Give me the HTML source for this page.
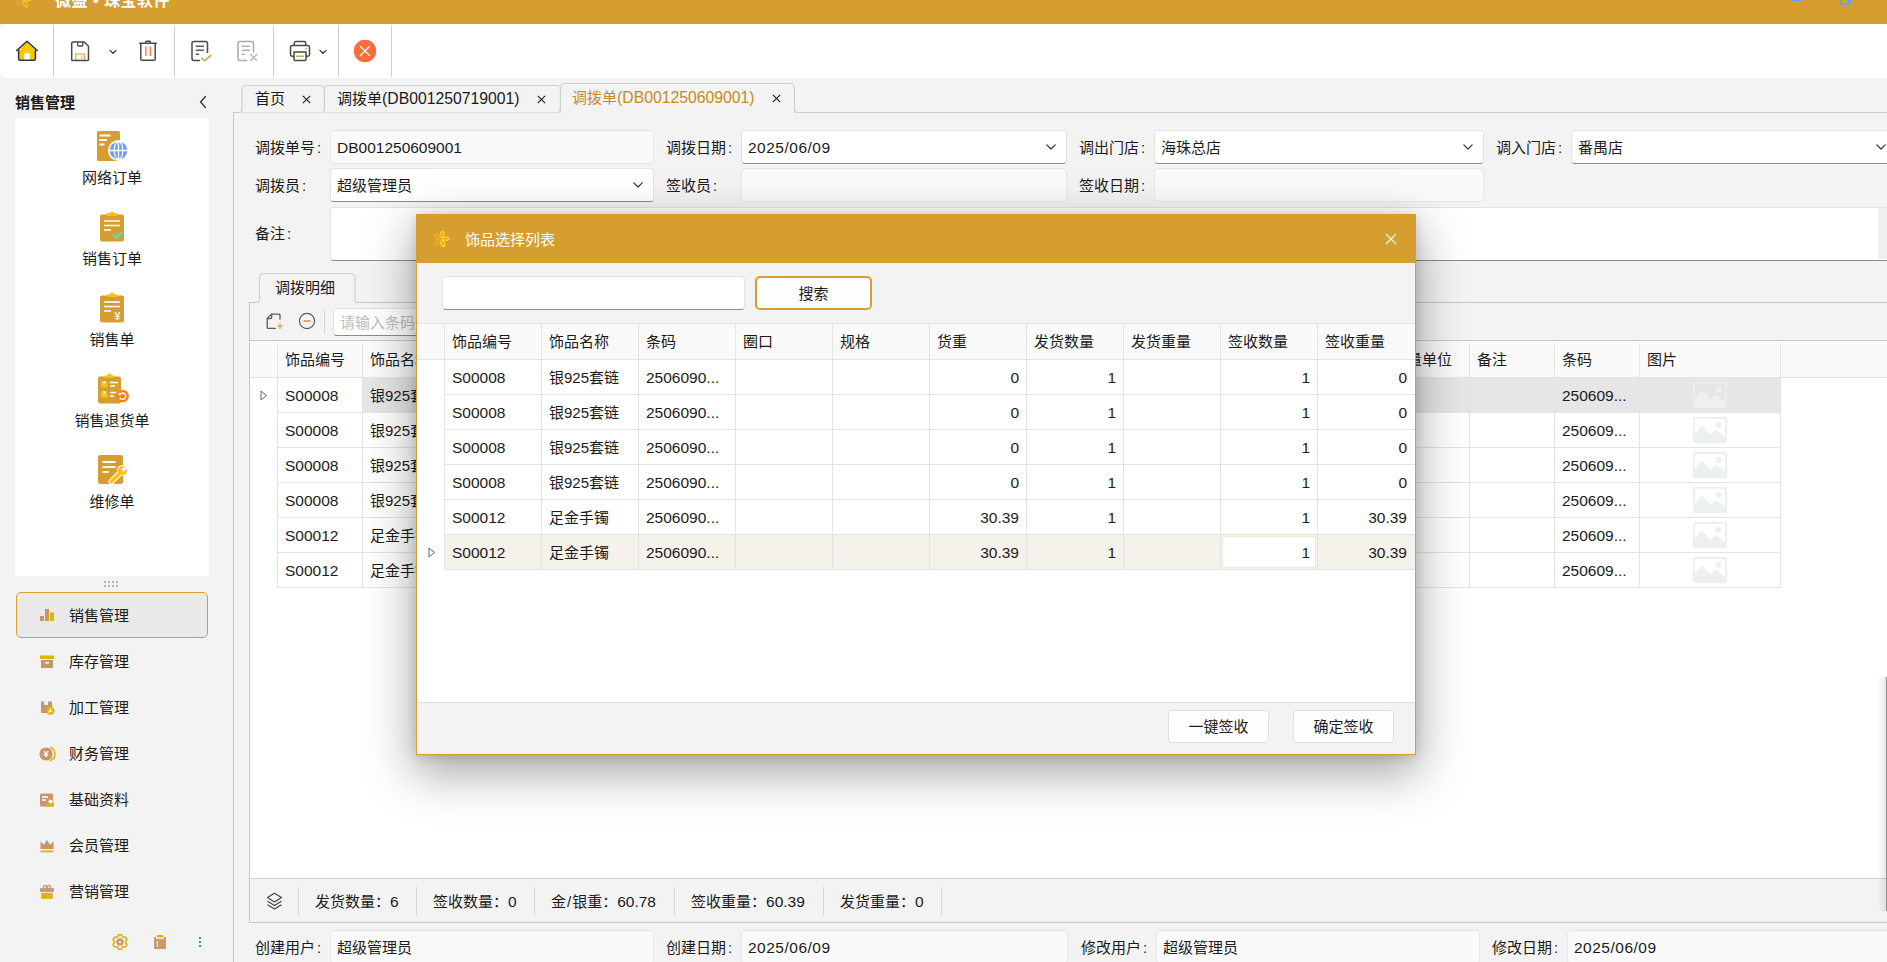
<!DOCTYPE html>
<html lang="zh-CN">
<head>
<meta charset="utf-8">
<title>微盛 • 珠宝软件</title>
<style>
*{box-sizing:border-box;margin:0;padding:0}
html,body{width:1887px;height:962px;overflow:hidden}
body{position:relative;background:#f3f3f3;font-family:"Liberation Sans","Noto Sans CJK SC",sans-serif;font-size:15px;color:#1b1b1b;line-height:20px}
.abs{position:absolute}
.l{font-size:15.5px}
.l2{font-size:15.5px;letter-spacing:.5px}
/* title bar */
#titlebar{position:absolute;left:0;top:0;width:1887px;height:24px;background:#d59e2e}
#titlebar .ttl{position:absolute;left:55px;top:-9px;letter-spacing:.5px;font-size:16px;font-weight:bold;color:#fff;line-height:20px;white-space:nowrap}
/* toolbar */
#toolbar{position:absolute;left:0;top:24px;width:1887px;height:54px;background:#fff;border-radius:7px 0 0 7px}
.tsep{position:absolute;top:1px;width:1px;height:52px;background:#d0d0d0}
.ticon{position:absolute}
/* sidebar */
#sidebar{position:absolute;left:0;top:78px;width:233px;height:884px}
#sideborder{position:absolute;left:233px;top:112px;width:1px;height:850px;background:#c8c8c8}
#sidehead{position:absolute;left:15px;top:93px;font-weight:bold;font-size:15px;line-height:20px}
#sidepanel{position:absolute;left:15px;top:118px;width:194px;height:458px;background:#fff}
.sitem{position:absolute;left:0;width:194px;text-align:center;font-size:15px;line-height:20px;margin-top:1px}
.nav{position:absolute;left:16px;width:192px;height:46px;border-radius:5px;font-size:15px}
.nav.sel{background:#e9e9e9;border:1px solid #d59e2e}
.nav span{position:absolute;left:53px;top:14px;line-height:20px;white-space:nowrap}
.nav.sel span{left:52px;top:13px}
.nav svg{position:absolute;left:23px;top:16px}
.nav.sel svg{left:22px;top:15px}
/* tabs */
.tab{position:absolute;top:85px;height:28px;background:#f3f3f3;border:1px solid #d2d2d2;border-bottom:none;border-radius:6px 6px 0 0;font-size:15px;line-height:20px;white-space:nowrap}
.tab span{position:absolute;top:3px}
.tab.act{top:83px;height:30px;color:#c88a1c;z-index:2}
#mainline{position:absolute;left:233px;top:112px;width:1654px;height:1px;background:#c8c8c8}
/* form */
.lbl{position:absolute;font-size:15px;line-height:20px;white-space:nowrap}
.inp{position:absolute;height:34px;border:1px solid #e6e6e6;border-radius:4px;background:#fafafa;font-size:15px;line-height:20px;padding:7px 0 0 6px;white-space:nowrap}
.inp.w{background:#fff;border-color:#e2e2e2;border-bottom:1px solid #8c8c8c}
i{font-style:normal;margin-left:2px}
b{font-weight:normal;margin:0 1px}
.chev{position:absolute;width:10px;height:6px}
/* grid */
.g{position:absolute;font-size:15px;line-height:20px;white-space:nowrap}
.hl{position:absolute;height:1px;background:#e3e3e3}
.vl{position:absolute;width:1px;background:#e3e3e3}
.ph{position:absolute;width:34px;height:26px}
/* dialog */
#dlg{position:absolute;left:416px;top:214px;width:1000px;height:541px;background:#fff;border:1px solid #d59e2e;box-shadow:0 16px 44px 3px rgba(0,0,0,.34),0 2px 10px rgba(0,0,0,.14);z-index:10}
#dlgtitle{position:absolute;left:0;top:0;width:998px;height:48px;background:#d59e2e}
.btn{position:absolute;height:33px;background:#fefefe;border:1px solid #e0e0e0;border-radius:4px;text-align:center;font-size:15px;line-height:20px;padding-top:6px}
</style>
</head>
<body>
<div id="titlebar">
<svg class="abs" style="left:15px;top:-9px" width="17" height="17" viewBox="-8.5 -8.5 17 17" fill="none" stroke-width="1.3" stroke-linecap="round" opacity=".85">
<g stroke="#ffd42a"><ellipse cx="0" cy="-4.6" rx="1.6" ry="3.2" transform="rotate(15)"/><ellipse cx="0" cy="-4.6" rx="1.6" ry="3.2" transform="rotate(87)"/><ellipse cx="0" cy="-4.6" rx="1.6" ry="3.2" transform="rotate(159)"/></g>
<g stroke="#f7a823"><ellipse cx="0" cy="-4.6" rx="1.6" ry="3.2" transform="rotate(231)"/><ellipse cx="0" cy="-4.6" rx="1.6" ry="3.2" transform="rotate(303)"/></g>
</svg>
<div class="ttl">微盛 • 珠宝软件</div>
<svg class="abs" style="left:1791px;top:-1px" width="12" height="3" viewBox="0 0 12 3"><rect x="0" y="0" width="10" height="2" fill="#5ba3ee"/></svg>
<svg class="abs" style="left:1840px;top:-6px" width="12" height="12" viewBox="0 0 12 12" fill="none" stroke="#5ba3ee" stroke-width="1.2"><rect x="1" y="3" width="7.5" height="7.5" rx="1.2"/><path d="M4 1h6.500v7.800h-1.800"/></svg>
</div>
<div id="toolbar">
<div class="tsep" style="left:53px"></div><div class="tsep" style="left:174px"></div><div class="tsep" style="left:273px"></div><div class="tsep" style="left:338px"></div><div class="tsep" style="left:391px"></div>
<!-- home -->
<svg class="ticon" style="left:15px;top:15px" width="24" height="24" viewBox="0 0 24 24"><path d="M3.6 11.2V20c0 .7.5 1.2 1.2 1.200h14.400c.7 0 1.200-.5 1.200-1.200V11.200L12 2.600z" fill="#f5c800"/><path d="M9.200 21.200V15.200c0-.5.400-.9.900-.9h3.800c.5 0 .9.400.9.900v6z" fill="#fff"/><path d="M3.600 11.500V20c0 .7.500 1.200 1.200 1.200h14.400c.7 0 1.200-.5 1.200-1.200v-8.500M1.700 11.500 12 2.300l10.300 9.200" fill="none" stroke="#2f3540" stroke-width="1.500" stroke-linecap="round" stroke-linejoin="round"/></svg>
<!-- save -->
<svg class="ticon" style="left:69px;top:15px" width="22" height="24" viewBox="0 0 22 24" fill="none" stroke-linejoin="round"><path d="M6.800 15h8.600v6.200H6.800z" stroke="#d59e2e" stroke-width="1.100"/><path d="M12.700 17.200v2.300" stroke="#d59e2e" stroke-width="1.100"/><path d="M2.700 4.200c0-.7.500-1.200 1.200-1.200h11.300l4.300 4.300v13.100c0 .700-.5 1.200-1.200 1.200H3.900c-.7 0-1.200-.5-1.200-1.200z" stroke="#4a4a4a" stroke-width="1.500"/><path d="M8.600 3.200v2.900c0 .5.400.9.900.9h3.400c.5 0 .9-.4.900-.9V3.200" stroke="#4a4a4a" stroke-width="1.300"/></svg>
<svg class="ticon" style="left:108px;top:25px" width="10" height="6" viewBox="0 0 10 6" fill="none" stroke="#333" stroke-width="1.300" stroke-linecap="round" stroke-linejoin="round"><path d="M2 1.400 5 4.300 8 1.400"/></svg>
<!-- trash -->
<svg class="ticon" style="left:137px;top:15px" width="22" height="24" viewBox="0 0 22 24" fill="none"><path d="M8.900 7.500v9.500M13.300 7.500v9.500" stroke="#ff7043" stroke-width="1.300"/><path d="M2.200 4.300h17.600M8.700 4.100V3c0-.4.300-.7.700-.7h3.200c.4 0 .7.300.7.700v1.100M3.800 4.500v15.700c0 .6.400 1 1 1h12.400c.6 0 1-.4 1-1V4.500" stroke="#4a4a4a" stroke-width="1.500" stroke-linejoin="round"/></svg>
<!-- doc check -->
<svg class="ticon" style="left:189px;top:15px" width="24" height="24" viewBox="0 0 24 24" fill="none" stroke-linecap="round" stroke-linejoin="round"><path d="M18.500 13.500V4.400c0-1.100-.9-2-2-2H5c-1.100 0-2 .9-2 2v15.200c0 1.100.9 2 2 2h5.500" stroke="#4a4a4a" stroke-width="1.500"/><path d="M6.700 7.200h8.200M6.700 11.200h8.200M6.700 15.200h3.300" stroke="#5a5a5a" stroke-width="1.600" stroke-linecap="butt"/><path d="M12.600 19.200l3.200 2.600 6-5.400" stroke="#d59e2e" stroke-width="1.500"/></svg>
<!-- doc x -->
<svg class="ticon" style="left:235px;top:15px" width="24" height="24" viewBox="0 0 24 24" fill="none" stroke-linecap="round" stroke-linejoin="round"><path d="M18.500 13V4.400c0-1.100-.9-2-2-2H5c-1.100 0-2 .9-2 2v15.200c0 1.100.9 2 2 2h6.500" stroke="#a9a9a9" stroke-width="1.500"/><path d="M6.700 7.200h8.200M6.700 11.200h8.200M6.700 15.200h3.300" stroke="#b0b0b0" stroke-width="1.600" stroke-linecap="butt"/><path d="M15.600 15.600l6 6M21.600 15.600l-6 6" stroke="#b9b9b9" stroke-width="1.400"/></svg>
<!-- printer -->
<svg class="ticon" style="left:288px;top:15px" width="24" height="24" viewBox="0 0 24 24" fill="none" stroke-linejoin="round"><path d="M6.300 6.600V4c0-.8.600-1.400 1.400-1.400h8.600c.8 0 1.400.6 1.400 1.400v2.600" stroke="#4a4a4a" stroke-width="1.500"/><path d="M6 17.200H4.200c-1 0-1.700-.8-1.700-1.700V8.300c0-1 .8-1.700 1.700-1.700h15.600c1 0 1.700.8 1.700 1.700v7.200c0 1-.8 1.700-1.700 1.700H18" stroke="#4a4a4a" stroke-width="1.500"/><path d="M6 13h12v7.300c0 .6-.5 1.100-1.100 1.100H7.100c-.6 0-1.100-.5-1.100-1.100z" stroke="#4a4a4a" stroke-width="1.500"/><path d="M8.200 17.200h7.600" stroke="#d59e2e" stroke-width="1.400"/><rect x="17.200" y="9" width="1.600" height="1.600" fill="#e9a23b"/></svg>
<svg class="ticon" style="left:318px;top:25px" width="10" height="6" viewBox="0 0 10 6" fill="none" stroke="#333" stroke-width="1.300" stroke-linecap="round" stroke-linejoin="round"><path d="M2 1.400 5 4.300 8 1.400"/></svg>
<!-- close -->
<svg class="ticon" style="left:353px;top:15px" width="24" height="24" viewBox="0 0 24 24"><circle cx="12" cy="12" r="11.200" fill="#fb6d3a"/><path d="M7.500 7.500l9 9M16.500 7.500l-9 9" stroke="#fff" stroke-width="1.300" stroke-linecap="round"/></svg>
</div>
<div id="sidehead">销售管理</div>
<svg class="abs" style="left:198px;top:95px" width="10" height="14" viewBox="0 0 10 14" fill="none" stroke="#333" stroke-width="1.300" stroke-linecap="round" stroke-linejoin="round"><path d="M7.500 1.500 2.500 7l5 5.500"/></svg>
<div id="sidepanel">
<!-- 网络订单 -->
<svg class="abs" style="left:81px;top:12px" width="34" height="32" viewBox="0 0 34 32"><rect x="1" y="1" width="23" height="30" rx="1.500" fill="#d59e2e"/><path d="M3.500 5.500h11M3.500 10h7.500M3.500 14.500h5" stroke="#fff" stroke-width="1.800"/><circle cx="22.500" cy="20.500" r="10.500" fill="#fff"/><circle cx="22.500" cy="20.500" r="8.800" fill="#6f9bf5"/><path d="M13.700 20.500h17.600M22.500 11.700v17.600" stroke="#fff" stroke-width="1.300" fill="none"/><ellipse cx="22.500" cy="20.500" rx="4.300" ry="8.800" fill="none" stroke="#fff" stroke-width="1.300"/></svg>
<div class="sitem" style="top:49px">网络订单</div>
<!-- 销售订单 -->
<svg class="abs" style="left:83px;top:92px" width="28" height="32" viewBox="0 0 28 32"><path d="M10 4.500 14 1l4 3.500z" fill="#f5c21a"/><rect x="8.500" y="3" width="11" height="3.500" rx="1" fill="#f5c21a"/><rect x="2" y="4.500" width="24" height="27" rx="2" fill="#d59e2e"/><rect x="8.500" y="3.600" width="11" height="2.400" rx="1" fill="#f5c21a"/><path d="M6 11h16M6 15.500h16M6 20h7" stroke="#fff" stroke-width="1.700"/><path d="M15.500 24.500l3 3 5.500-5.500" stroke="#5fe0b0" stroke-width="2" fill="none"/></svg>
<div class="sitem" style="top:130px">销售订单</div>
<!-- 销售单 -->
<svg class="abs" style="left:83px;top:173px" width="28" height="32" viewBox="0 0 28 32"><path d="M10 4.500 14 1l4 3.500z" fill="#f5c21a"/><rect x="2" y="4.500" width="24" height="27" rx="2" fill="#d59e2e"/><rect x="8.500" y="3.600" width="11" height="2.400" rx="1" fill="#f5c21a"/><path d="M6 11h16M6 15.500h16M6 20h7" stroke="#fff" stroke-width="1.700"/><text x="19.500" y="29" font-size="10.500" font-weight="bold" fill="#fff7d6" text-anchor="middle" font-family="Liberation Sans,sans-serif">¥</text></svg>
<div class="sitem" style="top:211px">销售单</div>
<!-- 销售退货单 -->
<svg class="abs" style="left:81px;top:254px" width="34" height="32" viewBox="0 0 34 32"><path d="M9.500 4.500 13.500 1l4 3.500z" fill="#f5c21a"/><rect x="2" y="4.500" width="23" height="27" rx="2" fill="#d59e2e"/><rect x="8" y="3.600" width="11" height="2.400" rx="1" fill="#f5c21a"/><rect x="5" y="9" width="6.500" height="6.500" fill="#f5c21a"/><rect x="5" y="19" width="6.500" height="6.500" fill="#f5c21a"/><rect x="7.500" y="9" width="1.500" height="2.500" fill="#fff"/><rect x="7.500" y="19" width="1.500" height="2.500" fill="#fff"/><path d="M14 10.500h8M14 14h5M14 20.500h6M14 24h4" stroke="#fff" stroke-width="1.600"/><circle cx="26.500" cy="24" r="6.300" fill="#ff7d1a"/><path d="M24 22.200a3.200 3.200 0 1 1-.3 3.400" stroke="#fff" stroke-width="1.400" fill="none"/><path d="M22.600 20.300v3h3z" fill="#fff"/></svg>
<div class="sitem" style="top:292px">销售退货单</div>
<!-- 维修单 -->
<svg class="abs" style="left:81px;top:335px" width="34" height="32" viewBox="0 0 34 32"><rect x="2" y="2" width="25" height="29" rx="2.500" fill="#d59e2e"/><path d="M6.500 9h13M6.500 14h13M6.500 19h6" stroke="#fff" stroke-width="1.800"/><g stroke-linecap="round"><path d="M15.500 28.500 25 19" stroke="#fff" stroke-width="6"/><circle cx="26.500" cy="17.500" r="5.600" fill="#fff"/><path d="M15.500 28.500 25 19" stroke="#fbbf24" stroke-width="3.600"/><circle cx="26.500" cy="17.500" r="4.500" fill="#fbbf24"/><path d="M26.500 17.500 33 11.500" stroke="#fff" stroke-width="3.200" stroke-linecap="butt"/></g></svg>
<div class="sitem" style="top:373px">维修单</div>
</div>
<!-- grip dots -->
<svg class="abs" style="left:104px;top:581px" width="16" height="6" viewBox="0 0 16 6" fill="#b4b4b4"><rect x="0" y="0" width="2" height="2"/><rect x="4" y="0" width="2" height="2"/><rect x="8" y="0" width="2" height="2"/><rect x="12" y="0" width="2" height="2"/><rect x="0" y="4" width="2" height="2"/><rect x="4" y="4" width="2" height="2"/><rect x="8" y="4" width="2" height="2"/><rect x="12" y="4" width="2" height="2"/></svg>
<!-- nav -->
<div class="nav sel" style="top:592px"><svg width="16" height="16" viewBox="0 0 16 16"><rect x="1" y="8" width="4" height="5" fill="#c9966b"/><rect x="6" y="1" width="4" height="12" fill="#c9966b"/><rect x="11" y="4.500" width="4" height="8.500" fill="#e0b400"/></svg><span>销售管理</span></div>
<div class="nav" style="top:638px"><svg width="16" height="16" viewBox="0 0 16 16"><rect x="1" y="1.500" width="14" height="3.500" fill="#e0b400"/><rect x="2" y="6" width="12" height="8" fill="#c9966b"/><rect x="6" y="8" width="4" height="1.500" fill="#fff"/></svg><span>库存管理</span></div>
<div class="nav" style="top:684px"><svg width="16" height="16" viewBox="0 0 16 16"><path d="M2 1.500h3.200v3.500h3.800v-3.500h4v8H2z" fill="#c9966b"/><rect x="2" y="9" width="6" height="4" fill="#c9966b"/><circle cx="11.300" cy="10.800" r="4.200" fill="#e0b400"/><path d="M9.600 12.500l2-2" stroke="#fff" stroke-width="1.200"/><path d="M12.900 8.600a1.700 1.700 0 1 0 .8 2.300l-1.300.3-.7-.9z" fill="#fff"/></svg><span>加工管理</span></div>
<div class="nav" style="top:730px"><svg width="18" height="16" viewBox="0 0 18 16"><path d="M11 1.300a7 7 0 0 1 0 13.400" stroke="#e0b400" stroke-width="1.500" fill="none"/><circle cx="7" cy="8" r="6.600" fill="#c9966b"/><text x="7" y="11.300" font-size="9" font-weight="bold" fill="#fff" text-anchor="middle" font-family="Liberation Sans,sans-serif">¥</text></svg><span>财务管理</span></div>
<div class="nav" style="top:776px"><svg width="16" height="16" viewBox="0 0 16 16"><rect x="1" y="1.500" width="13" height="13" rx="1.500" fill="#c9966b"/><path d="M3 5h6M3 8h4" stroke="#fff" stroke-width="1.300"/><path d="M7 14.500h8V11l-2.500-2.500L9 12l-2 .5z" fill="#e0b400"/><circle cx="11.500" cy="9.500" r="2" fill="#fff"/></svg><span>基础资料</span></div>
<div class="nav" style="top:822px"><svg width="16" height="16" viewBox="0 0 16 16"><path d="M1.500 11V3.500l3.500 3 3-4.500 3 4.500 3.500-3V11z" fill="#c9966b"/><rect x="1.500" y="12.500" width="13" height="1.800" fill="#e0b400"/></svg><span>会员管理</span></div>
<div class="nav" style="top:868px"><svg width="16" height="16" viewBox="0 0 16 16"><circle cx="6" cy="3" r="1.600" fill="none" stroke="#c9966b" stroke-width="1.200"/><circle cx="10" cy="3" r="1.600" fill="none" stroke="#c9966b" stroke-width="1.200"/><rect x="1" y="4.200" width="14" height="3.600" fill="#c9966b"/><rect x="2.200" y="8.800" width="11.600" height="6" fill="#e0b400"/></svg><span>营销管理</span></div>
<!-- bottom icons -->
<svg class="abs" style="left:111px;top:933px" width="18" height="18" viewBox="-9 -9 18 18"><path d="M-1.54 -7.24 1.54 -7.24 2.23 -5.25 3.43 -4.55 5.50 -4.95 7.04 -2.29 5.66 -0.69 5.66 0.69 7.04 2.29 5.50 4.95 3.43 4.55 2.23 5.25 1.54 7.24 -1.54 7.24 -2.23 5.25 -3.43 4.55 -5.50 4.95 -7.04 2.29 -5.66 0.69 -5.66 -0.69 -7.04 -2.29 -5.50 -4.95 -3.43 -4.55 -2.23 -5.25z" fill="none" stroke="#d9b200" stroke-width="1.500" stroke-linejoin="round"/><path d="M0-4.200 3.600-2.100 3.600 2.100 0 4.200-3.600 2.100-3.600-2.100z" fill="#c9996f"/><circle r="1.100" fill="#fff"/></svg>
<svg class="abs" style="left:153px;top:934px" width="14" height="16" viewBox="0 0 14 16"><rect x="1" y="3" width="12" height="12" rx=".6" fill="#c9996f"/><rect x="3.200" y="2.400" width="7.600" height="2.600" fill="#f3f3f3"/><rect x="4.200" y="1" width="5.600" height="2.500" rx=".5" fill="#d9b200"/><rect x="3.800" y="7" width="1.200" height="6" fill="#f1e6dc"/></svg>
<svg class="abs" style="left:198px;top:936px" width="4" height="12" viewBox="0 0 4 12" fill="#2196d9"><rect x="1" y="1" width="2" height="2"/><rect x="1" y="5" width="2" height="2"/><rect x="1" y="9" width="2" height="2"/></svg>
<div id="sideborder"></div>
<div id="mainline"></div>
<svg class="abs" style="left:230px;top:78px;z-index:1" width="620" height="40" viewBox="230 78 620 40" fill="#f3f3f3" stroke="#d0d0d0" stroke-width="1.200">
<path d="M239 112.5Q242 112.5 242 109.5L242 89.5Q242 85.5 246 85.5L320.5 85.5Q324.5 85.5 324.5 89.5L324.5 109.5Q324.5 112.5 327.5 112.5"/>
<path d="M321.5 112.5Q324.5 112.5 324.5 109.5L324.5 89.5Q324.5 85.5 328.5 85.5L556.5 85.5Q560.5 85.5 560.5 89.5L560.5 109.5Q560.5 112.5 563.5 112.5"/>
<path d="M557.5 112.5Q560.5 112.5 560.5 109.5L560.5 88.5Q560.5 83.5 565.5 83.5L789.5 83.5Q794.5 83.5 794.5 88.5L794.5 109.5Q794.5 112.5 797.5 112.5" stroke="none"/>
<rect x="561" y="111" width="233" height="3" stroke="none"/>
<path d="M557.5 112.5Q560.5 112.5 560.5 109.5L560.5 88.5Q560.5 83.5 565.5 83.5L789.5 83.5Q794.5 83.5 794.5 88.5L794.5 109.5Q794.5 112.5 797.5 112.5" fill="none"/>
</svg>
<div class="g" style="left:255px;top:89px;z-index:2">首页</div><svg class="abs" style="left:302px;top:95px;z-index:2" width="9" height="9" viewBox="0 0 9 9" stroke="#222" stroke-width="1.150" fill="none"><path d="M.8.800l7.400 7.400M8.200.800.800 8.200"/></svg>
<div class="g" style="left:337px;top:89px;z-index:2">调拨单<span class="l" style="font-size:15.75px">(DB001250719001)</span></div><svg class="abs" style="left:537px;top:95px;z-index:2" width="9" height="9" viewBox="0 0 9 9" stroke="#222" stroke-width="1.150" fill="none"><path d="M.8.800l7.400 7.400M8.200.800.800 8.200"/></svg>
<div class="g" style="left:572px;top:88px;z-index:2;color:#c88a1c">调拨单<span class="l" style="font-size:15.75px">(DB001250609001)</span></div><svg class="abs" style="left:772px;top:94px;z-index:2" width="9" height="9" viewBox="0 0 9 9" stroke="#222" stroke-width="1.150" fill="none"><path d="M.8.800l7.400 7.400M8.200.800.800 8.200"/></svg>
<div class="lbl" style="left:255px;top:138px">调拨单号<i>:</i></div>
<div class="inp" style="left:330px;top:130px;width:324px"><span class="l">DB001250609001</span></div>
<div class="lbl" style="left:666px;top:138px">调拨日期<i>:</i></div>
<div class="inp w" style="left:741px;top:130px;width:326px"><span class="l2">2025/06/09</span></div>
<svg class="chev" style="left:1046px;top:144px" viewBox="0 0 10 6" fill="none" stroke="#333" stroke-width="1.200" stroke-linecap="round" stroke-linejoin="round"><path d="M.8.800 5 5 9.200.800"/></svg>
<div class="lbl" style="left:1079px;top:138px">调出门店<i>:</i></div>
<div class="inp w" style="left:1154px;top:130px;width:330px">海珠总店</div>
<svg class="chev" style="left:1463px;top:144px" viewBox="0 0 10 6" fill="none" stroke="#333" stroke-width="1.200" stroke-linecap="round" stroke-linejoin="round"><path d="M.8.800 5 5 9.200.800"/></svg>
<div class="lbl" style="left:1496px;top:138px">调入门店<i>:</i></div>
<div class="inp w" style="left:1571px;top:130px;width:330px">番禺店</div>
<svg class="chev" style="left:1876px;top:144px" viewBox="0 0 10 6" fill="none" stroke="#333" stroke-width="1.200" stroke-linecap="round" stroke-linejoin="round"><path d="M.8.800 5 5 9.200.800"/></svg>
<div class="lbl" style="left:255px;top:176px">调拨员<i>:</i></div>
<div class="inp w" style="left:330px;top:168px;width:324px">超级管理员</div>
<svg class="chev" style="left:633px;top:182px" viewBox="0 0 10 6" fill="none" stroke="#333" stroke-width="1.200" stroke-linecap="round" stroke-linejoin="round"><path d="M.8.800 5 5 9.200.800"/></svg>
<div class="lbl" style="left:666px;top:176px">签收员<i>:</i></div>
<div class="inp" style="left:741px;top:168px;width:326px"></div>
<div class="lbl" style="left:1079px;top:176px">签收日期<i>:</i></div>
<div class="inp" style="left:1154px;top:168px;width:330px"></div>
<div class="lbl" style="left:255px;top:224px">备注<i>:</i></div>
<div class="inp w" style="left:330px;top:207px;width:1571px;height:54px"></div>
<div class="abs" style="left:1878px;top:208px;width:9px;height:51px;background:#f0f0f0"></div>
<!-- bottom form -->
<div class="lbl" style="left:255px;top:938px">创建用户<i>:</i></div>
<div class="inp" style="left:330px;top:930px;width:324px">超级管理员</div>
<div class="lbl" style="left:666px;top:938px">创建日期<i>:</i></div>
<div class="inp" style="left:741px;top:930px;width:327px"><span class="l2">2025/06/09</span></div>
<div class="lbl" style="left:1081px;top:938px">修改用户<i>:</i></div>
<div class="inp" style="left:1156px;top:930px;width:324px">超级管理员</div>
<div class="lbl" style="left:1492px;top:938px">修改日期<i>:</i></div>
<div class="inp" style="left:1567px;top:930px;width:330px"><span class="l2">2025/06/09</span></div>
<div class="abs" style="left:249px;top:302px;width:1638px;height:1px;background:#c8c8c8"></div>
<svg class="abs" style="left:250px;top:268px" width="120" height="40" viewBox="250 268 120 40" fill="#f3f3f3" stroke="#d0d0d0" stroke-width="1.200"><path d="M256 302.500Q259.500 302.500 259.500 299L259.500 278.500Q259.500 273.500 264.500 273.500L350 273.500Q355 273.500 355 278.500L355 299Q355 302.500 358.500 302.500" stroke="none"/><rect x="260" y="301" width="94.500" height="3" stroke="none"/><path d="M256 302.500Q259.500 302.500 259.500 299L259.500 278.500Q259.500 273.500 264.500 273.500L350 273.500Q355 273.500 355 278.500L355 299Q355 302.500 358.500 302.500" fill="none"/></svg>
<div class="g" style="left:275px;top:278px">调拨明细</div>
<div class="abs" style="left:249px;top:302px;width:1px;height:621px;background:#c8c8c8"></div>
<svg class="abs" style="left:265px;top:312px" width="20" height="19" viewBox="0 0 20 19" fill="none" stroke-linecap="round" stroke-linejoin="round"><path d="M15 7V3.300c0-.7-.5-1.200-1.200-1.200H6.500L2.200 6.400v8.800c0 .7.500 1.200 1.200 1.200h6.800" stroke="#5a5a5a" stroke-width="1.300"/><path d="M6.700 2.300v3c0 .7-.5 1.200-1.200 1.200h-3" stroke="#5a5a5a" stroke-width="1.300"/><path d="M15 11.500v5M12.500 14h5" stroke="#d59e2e" stroke-width="1.200"/></svg>
<svg class="abs" style="left:298px;top:312px" width="18" height="18" viewBox="0 0 18 18" fill="none"><circle cx="9" cy="9" r="7.600" stroke="#5a5a5a" stroke-width="1.200"/><path d="M5.500 9h7" stroke="#ff7a3d" stroke-width="1.500"/></svg>
<div class="abs" style="left:324px;top:309px;width:1px;height:25px;background:#d6d6d6"></div>
<div class="inp w" style="left:333px;top:308px;width:300px;height:28px;padding-top:4px;color:#bdbdbd">请输入条码</div>
<div class="abs" style="left:250px;top:341px;width:1637px;height:537px;background:#fff"></div>
<div class="abs" style="left:250px;top:341px;width:1637px;height:36px;background:#fafafa"></div>
<div class="abs" style="left:250px;top:340px;width:1637px;height:1px;background:#c8c8c8"></div>
<div class="abs" style="left:363px;top:378px;width:1418px;height:34px;background:#e6e6e6"></div>
<div class="hl" style="left:250px;top:377px;width:1637px"></div>
<div class="hl" style="left:277px;top:412px;width:1504px"></div>
<div class="hl" style="left:277px;top:447px;width:1504px"></div>
<div class="hl" style="left:277px;top:482px;width:1504px"></div>
<div class="hl" style="left:277px;top:517px;width:1504px"></div>
<div class="hl" style="left:277px;top:552px;width:1504px"></div>
<div class="hl" style="left:277px;top:587px;width:1504px"></div>
<div class="vl" style="left:277px;top:343px;height:244px"></div>
<div class="vl" style="left:362px;top:343px;height:244px"></div>
<div class="vl" style="left:447px;top:343px;height:244px"></div>
<div class="vl" style="left:532px;top:343px;height:244px"></div>
<div class="vl" style="left:618px;top:343px;height:244px"></div>
<div class="vl" style="left:703px;top:343px;height:244px"></div>
<div class="vl" style="left:788px;top:343px;height:244px"></div>
<div class="vl" style="left:873px;top:343px;height:244px"></div>
<div class="vl" style="left:958px;top:343px;height:244px"></div>
<div class="vl" style="left:1043px;top:343px;height:244px"></div>
<div class="vl" style="left:1128px;top:343px;height:244px"></div>
<div class="vl" style="left:1214px;top:343px;height:244px"></div>
<div class="vl" style="left:1299px;top:343px;height:244px"></div>
<div class="vl" style="left:1384px;top:343px;height:244px"></div>
<div class="vl" style="left:1469px;top:343px;height:244px"></div>
<div class="vl" style="left:1554px;top:343px;height:244px"></div>
<div class="vl" style="left:1639px;top:343px;height:244px"></div>
<div class="vl" style="left:1780px;top:343px;height:244px"></div>
<div class="g" style="left:285px;top:350px">饰品编号</div>
<div class="g" style="left:370px;top:350px">饰品名称</div>
<div class="g" style="left:455px;top:350px">圈口</div>
<div class="g" style="left:540px;top:350px">规格</div>
<div class="g" style="left:626px;top:350px">货重</div>
<div class="g" style="left:711px;top:350px">金重</div>
<div class="g" style="left:796px;top:350px">银重</div>
<div class="g" style="left:881px;top:350px">石重</div>
<div class="g" style="left:966px;top:350px">数量</div>
<div class="g" style="left:1051px;top:350px">签收数量</div>
<div class="g" style="left:1136px;top:350px">发货重量</div>
<div class="g" style="left:1222px;top:350px">签收重量</div>
<div class="g" style="left:1307px;top:350px">成色</div>
<div class="g" style="left:1392px;top:350px">重量单位</div>
<div class="g" style="left:1477px;top:350px">备注</div>
<div class="g" style="left:1562px;top:350px">条码</div>
<div class="g" style="left:1647px;top:350px">图片</div>
<div class="g" style="left:285px;top:386px"><span class="l">S00008</span></div>
<div class="g" style="left:370px;top:386px">银925套链</div>
<div class="g" style="left:1562px;top:386px"><span class="l">250609...</span></div>
<svg class="ph" style="left:1693px;top:382px" viewBox="0 0 34 26"><rect x=".8" y=".8" width="32.400" height="24.400" rx="3" fill="none" stroke="#eaeeef" stroke-width="2"/><path d="M1.500 17 9 8.500l8.500 9 5.500-5 9.500 8V23a2 2 0 0 1-2 2H3.500a2 2 0 0 1-2-2z" fill="#ecf0f1"/><circle cx="25.500" cy="8" r="3" fill="#ecf0f1"/></svg>
<div class="g" style="left:285px;top:421px"><span class="l">S00008</span></div>
<div class="g" style="left:370px;top:421px">银925套链</div>
<div class="g" style="left:1562px;top:421px"><span class="l">250609...</span></div>
<svg class="ph" style="left:1693px;top:417px" viewBox="0 0 34 26"><rect x=".8" y=".8" width="32.400" height="24.400" rx="3" fill="none" stroke="#eaeeef" stroke-width="2"/><path d="M1.500 17 9 8.500l8.500 9 5.500-5 9.500 8V23a2 2 0 0 1-2 2H3.500a2 2 0 0 1-2-2z" fill="#ecf0f1"/><circle cx="25.500" cy="8" r="3" fill="#ecf0f1"/></svg>
<div class="g" style="left:285px;top:456px"><span class="l">S00008</span></div>
<div class="g" style="left:370px;top:456px">银925套链</div>
<div class="g" style="left:1562px;top:456px"><span class="l">250609...</span></div>
<svg class="ph" style="left:1693px;top:452px" viewBox="0 0 34 26"><rect x=".8" y=".8" width="32.400" height="24.400" rx="3" fill="none" stroke="#eaeeef" stroke-width="2"/><path d="M1.500 17 9 8.500l8.500 9 5.500-5 9.500 8V23a2 2 0 0 1-2 2H3.500a2 2 0 0 1-2-2z" fill="#ecf0f1"/><circle cx="25.500" cy="8" r="3" fill="#ecf0f1"/></svg>
<div class="g" style="left:285px;top:491px"><span class="l">S00008</span></div>
<div class="g" style="left:370px;top:491px">银925套链</div>
<div class="g" style="left:1562px;top:491px"><span class="l">250609...</span></div>
<svg class="ph" style="left:1693px;top:487px" viewBox="0 0 34 26"><rect x=".8" y=".8" width="32.400" height="24.400" rx="3" fill="none" stroke="#eaeeef" stroke-width="2"/><path d="M1.500 17 9 8.500l8.500 9 5.500-5 9.500 8V23a2 2 0 0 1-2 2H3.500a2 2 0 0 1-2-2z" fill="#ecf0f1"/><circle cx="25.500" cy="8" r="3" fill="#ecf0f1"/></svg>
<div class="g" style="left:285px;top:526px"><span class="l">S00012</span></div>
<div class="g" style="left:370px;top:526px">足金手镯</div>
<div class="g" style="left:1562px;top:526px"><span class="l">250609...</span></div>
<svg class="ph" style="left:1693px;top:522px" viewBox="0 0 34 26"><rect x=".8" y=".8" width="32.400" height="24.400" rx="3" fill="none" stroke="#eaeeef" stroke-width="2"/><path d="M1.500 17 9 8.500l8.500 9 5.500-5 9.500 8V23a2 2 0 0 1-2 2H3.500a2 2 0 0 1-2-2z" fill="#ecf0f1"/><circle cx="25.500" cy="8" r="3" fill="#ecf0f1"/></svg>
<div class="g" style="left:285px;top:561px"><span class="l">S00012</span></div>
<div class="g" style="left:370px;top:561px">足金手镯</div>
<div class="g" style="left:1562px;top:561px"><span class="l">250609...</span></div>
<svg class="ph" style="left:1693px;top:557px" viewBox="0 0 34 26"><rect x=".8" y=".8" width="32.400" height="24.400" rx="3" fill="none" stroke="#eaeeef" stroke-width="2"/><path d="M1.500 17 9 8.500l8.500 9 5.500-5 9.500 8V23a2 2 0 0 1-2 2H3.500a2 2 0 0 1-2-2z" fill="#ecf0f1"/><circle cx="25.500" cy="8" r="3" fill="#ecf0f1"/></svg>
<svg class="abs" style="left:260px;top:390px" width="8" height="11" viewBox="0 0 8 11" fill="none" stroke="#666" stroke-width="1"><path d="M1 1l5.500 4.500L1 10z"/></svg>
<div class="abs" style="left:250px;top:878px;width:1637px;height:1px;background:#d0d0d0"></div>
<div class="abs" style="left:249px;top:922px;width:1638px;height:1px;background:#c8c8c8"></div>
<svg class="abs" style="left:266px;top:892px" width="17" height="19" viewBox="0 0 17 19" fill="none" stroke="#444" stroke-width="1.200" stroke-linejoin="round"><path d="M8.500 1.300l7 4.300-7 4.300-7-4.300z"/><path d="M1.500 9.200l7 4.300 7-4.300M1.500 12.700l7 4.300 7-4.300"/></svg>
<div class="abs" style="left:298px;top:887px;width:1px;height:29px;background:#d6d6d6"></div>
<div class="abs" style="left:416px;top:887px;width:1px;height:29px;background:#d6d6d6"></div>
<div class="abs" style="left:534px;top:887px;width:1px;height:29px;background:#d6d6d6"></div>
<div class="abs" style="left:674px;top:887px;width:1px;height:29px;background:#d6d6d6"></div>
<div class="abs" style="left:823px;top:887px;width:1px;height:29px;background:#d6d6d6"></div>
<div class="abs" style="left:941px;top:887px;width:1px;height:29px;background:#d6d6d6"></div>
<div class="g" style="left:315px;top:892px">发货数量：<span class="l">6</span></div>
<div class="g" style="left:433px;top:892px">签收数量：<span class="l">0</span></div>
<div class="g" style="left:551px;top:892px">金<b>/</b>银重：<span class="l">60.78</span></div>
<div class="g" style="left:691px;top:892px">签收重量：<span class="l">60.39</span></div>
<div class="g" style="left:840px;top:892px">发货重量：<span class="l">0</span></div>
<div class="abs" style="left:1878px;top:677px;width:8px;height:234px;background:linear-gradient(to right,rgba(0,0,0,0),rgba(0,0,0,.09))"></div>
<div class="abs" style="left:1886px;top:677px;width:1px;height:234px;background:#909090"></div>
<div id="dlg">
<div id="dlgtitle">
<svg class="abs" style="left:15px;top:15px" width="18" height="18" viewBox="-9 -9 18 18" fill="none" stroke-width="1.500" stroke-linecap="round"><g stroke="#ffd42a"><ellipse cx="0" cy="-4.700" rx="1.600" ry="3.200" transform="rotate(15)"/><ellipse cx="0" cy="-4.700" rx="1.600" ry="3.200" transform="rotate(87)"/><ellipse cx="0" cy="-4.700" rx="1.600" ry="3.200" transform="rotate(159)"/></g><g stroke="#f7a823"><ellipse cx="0" cy="-4.700" rx="1.600" ry="3.200" transform="rotate(231)"/><ellipse cx="0" cy="-4.700" rx="1.600" ry="3.200" transform="rotate(303)"/></g></svg>
<div class="abs" style="left:48px;top:15px;color:#fff;white-space:nowrap">饰品选择列表</div>
<svg class="abs" style="left:968px;top:18px" width="12" height="12" viewBox="0 0 12 12" stroke="#fff" stroke-width="1.100" fill="none"><path d="M1 1l10 10M11 1 1 11"/></svg>
</div>
<div class="abs" style="left:0;top:48px;width:998px;height:61px;background:#f3f3f3"></div>
<div class="inp w" style="left:25px;top:61px;width:303px;height:34px"></div>
<div class="abs" style="left:338px;top:61px;width:117px;height:34px;border:2px solid #d59e2e;border-radius:5px;background:#fefefe;text-align:center;padding-top:6px">搜索</div>
<div class="abs" style="left:0;top:108px;width:998px;height:37px;background:#fafafa"></div>
<div class="hl" style="left:0;top:108px;width:998px"></div>
<div class="hl" style="left:0;top:144px;width:998px"></div>
<div class="abs" style="left:27px;top:320px;width:971px;height:34px;background:#f5f1eb"></div>
<div class="abs" style="left:805px;top:321px;width:94px;height:32px;background:#fff;border:1px solid #f5ead6"></div>
<div class="hl" style="left:27px;top:179px;width:971px"></div>
<div class="hl" style="left:27px;top:214px;width:971px"></div>
<div class="hl" style="left:27px;top:249px;width:971px"></div>
<div class="hl" style="left:27px;top:284px;width:971px"></div>
<div class="hl" style="left:27px;top:319px;width:971px"></div>
<div class="hl" style="left:27px;top:354px;width:971px"></div>
<div class="vl" style="left:27px;top:109px;height:245px"></div>
<div class="vl" style="left:124px;top:109px;height:245px"></div>
<div class="vl" style="left:221px;top:109px;height:245px"></div>
<div class="vl" style="left:318px;top:109px;height:245px"></div>
<div class="vl" style="left:415px;top:109px;height:245px"></div>
<div class="vl" style="left:512px;top:109px;height:245px"></div>
<div class="vl" style="left:609px;top:109px;height:245px"></div>
<div class="vl" style="left:706px;top:109px;height:245px"></div>
<div class="vl" style="left:803px;top:109px;height:245px"></div>
<div class="vl" style="left:900px;top:109px;height:245px"></div>
<div class="g" style="left:35px;top:117px">饰品编号</div>
<div class="g" style="left:132px;top:117px">饰品名称</div>
<div class="g" style="left:229px;top:117px">条码</div>
<div class="g" style="left:326px;top:117px">圈口</div>
<div class="g" style="left:423px;top:117px">规格</div>
<div class="g" style="left:520px;top:117px">货重</div>
<div class="g" style="left:617px;top:117px">发货数量</div>
<div class="g" style="left:714px;top:117px">发货重量</div>
<div class="g" style="left:811px;top:117px">签收数量</div>
<div class="g" style="left:908px;top:117px">签收重量</div>
<div class="g" style="left:35px;top:153px"><span class="l">S00008</span></div>
<div class="g" style="left:132px;top:153px">银925套链</div>
<div class="g" style="left:229px;top:153px"><span class="l">2506090...</span></div>
<div class="g" style="left:522px;width:80px;text-align:right;top:153px"><span class="l">0</span></div>
<div class="g" style="left:619px;width:80px;text-align:right;top:153px"><span class="l">1</span></div>
<div class="g" style="left:813px;width:80px;text-align:right;top:153px"><span class="l">1</span></div>
<div class="g" style="left:910px;width:80px;text-align:right;top:153px"><span class="l">0</span></div>
<div class="g" style="left:35px;top:188px"><span class="l">S00008</span></div>
<div class="g" style="left:132px;top:188px">银925套链</div>
<div class="g" style="left:229px;top:188px"><span class="l">2506090...</span></div>
<div class="g" style="left:522px;width:80px;text-align:right;top:188px"><span class="l">0</span></div>
<div class="g" style="left:619px;width:80px;text-align:right;top:188px"><span class="l">1</span></div>
<div class="g" style="left:813px;width:80px;text-align:right;top:188px"><span class="l">1</span></div>
<div class="g" style="left:910px;width:80px;text-align:right;top:188px"><span class="l">0</span></div>
<div class="g" style="left:35px;top:223px"><span class="l">S00008</span></div>
<div class="g" style="left:132px;top:223px">银925套链</div>
<div class="g" style="left:229px;top:223px"><span class="l">2506090...</span></div>
<div class="g" style="left:522px;width:80px;text-align:right;top:223px"><span class="l">0</span></div>
<div class="g" style="left:619px;width:80px;text-align:right;top:223px"><span class="l">1</span></div>
<div class="g" style="left:813px;width:80px;text-align:right;top:223px"><span class="l">1</span></div>
<div class="g" style="left:910px;width:80px;text-align:right;top:223px"><span class="l">0</span></div>
<div class="g" style="left:35px;top:258px"><span class="l">S00008</span></div>
<div class="g" style="left:132px;top:258px">银925套链</div>
<div class="g" style="left:229px;top:258px"><span class="l">2506090...</span></div>
<div class="g" style="left:522px;width:80px;text-align:right;top:258px"><span class="l">0</span></div>
<div class="g" style="left:619px;width:80px;text-align:right;top:258px"><span class="l">1</span></div>
<div class="g" style="left:813px;width:80px;text-align:right;top:258px"><span class="l">1</span></div>
<div class="g" style="left:910px;width:80px;text-align:right;top:258px"><span class="l">0</span></div>
<div class="g" style="left:35px;top:293px"><span class="l">S00012</span></div>
<div class="g" style="left:132px;top:293px">足金手镯</div>
<div class="g" style="left:229px;top:293px"><span class="l">2506090...</span></div>
<div class="g" style="left:522px;width:80px;text-align:right;top:293px"><span class="l">30.39</span></div>
<div class="g" style="left:619px;width:80px;text-align:right;top:293px"><span class="l">1</span></div>
<div class="g" style="left:813px;width:80px;text-align:right;top:293px"><span class="l">1</span></div>
<div class="g" style="left:910px;width:80px;text-align:right;top:293px"><span class="l">30.39</span></div>
<div class="g" style="left:35px;top:328px"><span class="l">S00012</span></div>
<div class="g" style="left:132px;top:328px">足金手镯</div>
<div class="g" style="left:229px;top:328px"><span class="l">2506090...</span></div>
<div class="g" style="left:522px;width:80px;text-align:right;top:328px"><span class="l">30.39</span></div>
<div class="g" style="left:619px;width:80px;text-align:right;top:328px"><span class="l">1</span></div>
<div class="g" style="left:813px;width:80px;text-align:right;top:328px"><span class="l">1</span></div>
<div class="g" style="left:910px;width:80px;text-align:right;top:328px"><span class="l">30.39</span></div>
<svg class="abs" style="left:11px;top:332px" width="8" height="11" viewBox="0 0 8 11" fill="none" stroke="#666" stroke-width="1"><path d="M1 1l5.500 4.500L1 10z"/></svg>
<div class="abs" style="left:0;top:487px;width:998px;height:52px;background:#f3f3f3;border-top:1px solid #dcdcdc;border-radius:4px 4px 0 0"></div>
<div class="btn" style="left:751px;top:495px;width:101px">一键签收</div>
<div class="btn" style="left:876px;top:495px;width:101px">确定签收</div>
</div>

</body>
</html>
